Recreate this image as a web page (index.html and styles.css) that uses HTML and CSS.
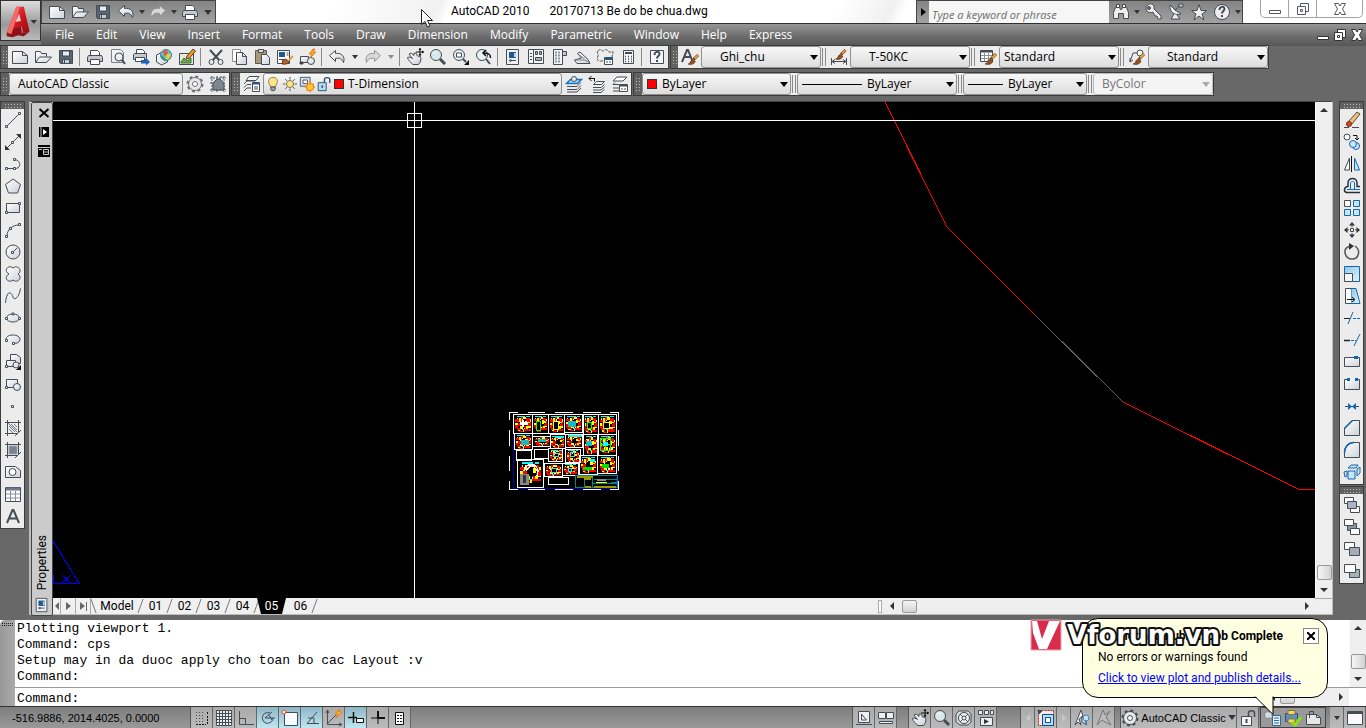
FILE: index.html
```html
<!DOCTYPE html>
<html lang="en">
<head>
<meta charset="utf-8">
<title>AutoCAD 2010 - 20170713 Be do be chua.dwg</title>
<link rel="stylesheet" href="styles.css">
</head>
<body>
<svg class="defs" aria-hidden="true">
  <defs>
    <linearGradient id="paper" x1="0" y1="0" x2="1" y2="1"><stop offset="0" stop-color="#fff"/><stop offset="1" stop-color="#cdd2da"/></linearGradient>
    <linearGradient id="sky" x1="0" y1="0" x2="1" y2="1"><stop offset="0" stop-color="#8ec6e8"/><stop offset="1" stop-color="#e4f4fc"/></linearGradient>
    <linearGradient id="ruby" x1="0" y1="0" x2="1" y2="1"><stop offset="0" stop-color="#f0605c"/><stop offset=".5" stop-color="#d21a20"/><stop offset="1" stop-color="#8c0a10"/></linearGradient>
  </defs>
  <!-- standard tools -->
  <symbol id="new" viewBox="0 0 18 18"><path d="M1.500 3.500h10l5 4v8h-15z" fill="url(#paper)"/><path d="M11.500 3.500v4h5"/></symbol>
  <symbol id="open" viewBox="0 0 18 18"><path d="M1.500 14.500v-11h5l1 2h5v3" fill="url(#paper)"/><path d="M1.500 14.500l4-5.500h12l-5 5.500z" fill="url(#paper)"/></symbol>
  <symbol id="save" viewBox="0 0 18 18"><path d="M2.500 2.500h13v13h-12l-1-1z" fill="#5b6572"/><path d="M5.500 3h7v5h-7z" fill="#e8edf2"/><path d="M5.500 11.500h7v4h-7z" fill="#c8ccd4"/><path d="M7.500 12v3"/></symbol>
  <symbol id="print" viewBox="0 0 18 18"><path d="M4.500 7.500v-5h7l2 2v3" fill="#fff"/><path d="M2.500 7.500h13l1 2v4h-15v-4z" fill="#c5c9cf"/><path d="M4.500 11.500h9v5h-9z" fill="#fff"/></symbol>
  <symbol id="preview" viewBox="0 0 18 18"><path d="M2.500 1.500h9l3 3v10h-12z" fill="url(#paper)" stroke="#7a828c"/><circle cx="10" cy="9" r="4" fill="#e9f1f5"/><path d="M13 12l3 4" stroke-width="2"/></symbol>
  <symbol id="publish" viewBox="0 0 18 18"><path d="M4.500 5.500v-4h6l2 2v2" fill="#fff"/><path d="M2.500 5.500h12v6h-13v-5z" fill="#c5c9cf"/><path d="M3.500 9.500h9v4h-9z" fill="#fff"/><path d="M9 12h5v-2l4 4-4 3.500v-2h-5z" fill="#1b62b8" stroke="none"/></symbol>
  <symbol id="globe" viewBox="0 0 18 18"><path d="M1.500 7l6-3 5 3v7l-6 3-5-3z" fill="url(#paper)"/><circle cx="11" cy="7" r="5.500" fill="#6cc0dc" stroke="#3b7f9c"/><path d="M8 3l4-1 1 4-4 2z" fill="#e95b2a" stroke="none"/><path d="M12 6h4l-2 5h-3z" fill="#e9d32a" stroke="none"/><path d="M7 7l4 5H9L6 9z" fill="#2b9c4c" stroke="none"/></symbol>
  <symbol id="chart" viewBox="0 0 18 18"><path d="M1.500 5.500h14v11h-14z" fill="#e4ecdf"/><path d="M3 14l3-4 3 3 4-3v5H3z" fill="#6aa84a" stroke="#3d7230"/><path d="M8 11l1-3 6-7 2.500 2-6 7z" fill="#f0a020" stroke="#5a3a20"/></symbol>
  <symbol id="cut" viewBox="0 0 18 18"><path d="M3 2l9 10M15 2L6 12" stroke-width="2"/><circle cx="4.500" cy="14" r="2.500"/><circle cx="13.500" cy="14" r="2.500"/></symbol>
  <symbol id="copyclip" viewBox="0 0 18 18"><path d="M2.500 1.500h8v12h-8z" fill="#fff" stroke="#8a8f96"/><path d="M6.500 4.500h6l4 4v8h-10z" fill="url(#paper)"/><path d="M12.500 4.500v4h4"/></symbol>
  <symbol id="paste" viewBox="0 0 18 18"><path d="M2.500 2.500h11v13h-11z" fill="#a99678" stroke="#62584a"/><path d="M5.500 1.500h5v3h-5z" fill="#ddd"/><path d="M8.500 6.500h5l3 3v7h-8z" fill="url(#paper)"/></symbol>
  <symbol id="match" viewBox="0 0 18 18"><path d="M1.500 2.500h12v13h-12z" fill="#fff"/><path d="M3 4h6v5H3z" fill="#24578c" stroke="none"/><path d="M10.500 5h2M10.500 7h2M3 11.500h5"/><path d="M7 12c3-2 5 0 6 2-2 3-5 2-7 2 1-1 0-3 1-4z" fill="#b4612a" stroke="#6a3512"/><path d="M13 12l4-4" stroke="#e89a3a" stroke-width="2"/></symbol>
  <symbol id="blockedit" viewBox="0 0 18 18"><path d="M1.500 8.500h8v6h-8z" fill="url(#paper)"/><circle cx="12" cy="13" r="3.500" fill="url(#paper)"/><path d="M1 14h3v2H1z" fill="#333"/><path d="M14 1l-4 5h3l-2 4 6-6h-3l2-3z" fill="#f5b030" stroke="#e08010"/></symbol>
  <symbol id="undo" viewBox="0 0 18 18"><path d="M1.500 7.500l6-5v3c6-1 10 3 8 9-2-4-4-5-8-4v3z" fill="url(#paper)"/></symbol>
  <symbol id="redo" viewBox="0 0 18 18"><path d="M16.500 7.500l-6-5v3c-6-1-10 3-8 9 2-4 4-5 8-4v3z" fill="#d9d9d9" stroke="#949494"/></symbol>
  <symbol id="caret" viewBox="0 0 6 4"><path d="M0 0h6L3 4z" fill="#333" stroke="none"/></symbol>
  <symbol id="pan" viewBox="0 0 18 18"><path d="M1.500 9.500c2-1 3 0 5 1L3 6l2-1 3 2.500V5l2 0 1.500 3 3 .5c1 3 0 6-2 8H7c-2-2-5-4-5.500-7z" fill="url(#paper)"/><path d="M14 0v8M10 4h8" stroke="#111"/><path d="M14 0l-1.500 2h3zM14 8l-1.500-2h3zM18 4l-2-1.500v3z" fill="#111" stroke="none"/></symbol>
  <symbol id="zoom" viewBox="0 0 18 18"><circle cx="7" cy="7" r="5.500" fill="#d8e8ea"/><path d="M4 6c1-2 3-2 4-2" stroke="#fff"/><path d="M11 11l5 5" stroke-width="3"/></symbol>
  <symbol id="zoomwin" viewBox="0 0 18 18"><circle cx="7" cy="7" r="5.500" fill="#e5f0f0"/><path d="M4.500 5h5v4h-5z" fill="#fff"/><path d="M11 11l3 3" stroke-width="2"/><path d="M17 12v5h-5z" fill="#111" stroke="none"/></symbol>
  <symbol id="zoomprev" viewBox="0 0 18 18"><circle cx="7" cy="7" r="5.500" fill="#e5f0f0"/><path d="M11 11l4 5" stroke-width="2"/><path d="M15.500 10c0-4-2-5-7-5M11 2L8 5l3 3" stroke="#111" stroke-width="1.500"/></symbol>
  <symbol id="props" viewBox="0 0 18 18"><path d="M2.500 1.500h12v15h-12z" fill="#eef0f3"/><path d="M5 4h7v6H5z" fill="#24578c" stroke="none"/><path d="M10 5h2v4h-2z" fill="#b7d3ec" stroke="none"/><path d="M5 12.500l2-1v2zM7 12.500h5"/></symbol>
  <symbol id="dcenter" viewBox="0 0 18 18"><path d="M1.500 1.500h15v14h-15z" fill="#f4f5f7"/><path d="M6.500 2v13M3 5.500h2M3 8.500h2M3 11.500h2"/><path d="M8.500 3.500h2v3h-2zM12.500 3.500h2v3h-2zM8.500 9.500h6v3h-6z" fill="#a9b0ba"/></symbol>
  <symbol id="palettes" viewBox="0 0 18 18"><path d="M3.500 1.500h9v15h-9z" fill="#f4f5f7"/><path d="M12.500 3.500h4v4h-4z" fill="#c6cad0"/><path d="M5 4.500h6M5 7.500h6M5 10.500h6M5 13.500h6" stroke-dasharray="2 1" stroke-width="2" stroke="#8c939c"/></symbol>
  <symbol id="sheets" viewBox="0 0 18 18"><path d="M1.500 12l2.500 3.500h13l-2-4-8-7.500-2.500 1.500 4 4.500z" fill="url(#paper)"/><path d="M4.500 5.500l7 5.500M1.500 12h10l4 2" stroke="#7a828c"/></symbol>
  <symbol id="markup" viewBox="0 0 18 18"><path d="M2 3c2-3 4 0 5 0s3-3 5 0 5-1 5 1-1 4-1 5M2 3c-2 2 1 3 0 5s-1 4 1 5 3-1 4 0" stroke-dasharray="3 1"/><path d="M8.500 9.500h8v7h-8z" fill="#fff"/><path d="M9 11h7" stroke="#24578c" stroke-width="2"/><path d="M10 14h2M13 14h2"/></symbol>
  <symbol id="calc" viewBox="0 0 18 18"><path d="M4.500 2.500h10v13h-10z" fill="#f4f5f7"/><path d="M6 5h7" stroke-width="2"/><path d="M6 8.500h7M6 11h7M6 13.500h7" stroke-dasharray="1 2" stroke-width="1.500"/></symbol>
  <symbol id="helpbox" viewBox="0 0 18 18"><path d="M2.500 2.500h13v13h-13z" fill="#f6f7f8"/><path d="M6.500 7c0-4 5-4 5-1 0 2-2.500 2-2.500 4.500M9 12v2" stroke-width="2"/></symbol>
  <symbol id="brush" viewBox="0 0 12 12"><path d="M0 11c3 0 2-4 5-5l3 2c-1 3-4 4-8 3z" fill="#955023" stroke="#5b2e10" stroke-width=".7"/><path d="M6 6l5-5" stroke="#55300f" stroke-width="3"/><path d="M7 5l4-4" stroke="#f2a23b" stroke-width="2"/></symbol>
  <symbol id="textstyle" viewBox="0 0 18 18"><path d="M1 14L6 2h1l4 10M3 9h6" stroke-width="2"/><use href="#brush" x="7" y="6" width="11" height="11"/></symbol>
  <symbol id="dimstyle" viewBox="0 0 18 18"><path d="M1.500 10v7M16.500 10v7M2 13.500h14M5 11.500l-3 2 3 2M13 11.500l3 2-3 2"/><use href="#brush" x="5" y="1" width="12" height="11"/></symbol>
  <symbol id="tablestyle" viewBox="0 0 18 18"><path d="M1.500 2.500h12v11h-12z" fill="#fff"/><path d="M2 3.500h11" stroke-width="2"/><path d="M2 7.500h11M2 10.500h11M5.500 5v8M9.500 5v8" stroke="#8b929b"/><use href="#brush" x="6" y="5" width="12" height="12"/></symbol>
  <symbol id="leaderstyle" viewBox="0 0 18 18"><path d="M2 14L5 5h5M2 14l0-4M2 14l3-2"/><circle cx="12" cy="5" r="3" fill="#fff"/><use href="#brush" x="5" y="5" width="12" height="12"/></symbol>
  <!-- workspace and layers -->
  <symbol id="gear" viewBox="0 0 18 18"><circle cx="9" cy="9" r="6.500" fill="#e8e8e8"/><circle cx="9" cy="9" r="7.500" stroke-width="2" stroke-dasharray="3 2.900"/><circle cx="9" cy="9" r="2.500" fill="#fff"/></symbol>
  <symbol id="wshome" viewBox="0 0 18 18"><path d="M3 1v16M1 3h16M15 1v16M1 15h16M8 1v2M8 15v3M12 1v2M1 8h2" stroke-dasharray="2 1"/><path d="M4 8l4-4h3l4 4v7H4z" fill="#7d858f"/></symbol>
  <symbol id="layers" viewBox="0 0 18 18"><path d="M3 5.500l3-4h10l-3 4zM1 9l3-3h8M1 12.500l3-3h4M1 16l3-3h4" fill="#f5f5f5"/><path d="M9.500 7.500h7v9h-7z" fill="#fff"/><path d="M10 8.500h6" stroke="#24578c" stroke-width="2"/><path d="M11 12h4M11 14h4"/></symbol>
  <symbol id="bulb" viewBox="0 0 18 18"><path d="M6 12c0-3-2-3-2-6 0-6 10-6 10 0 0 3-2 3-2 6z" fill="#ffe48a" stroke="#8d7638"/><path d="M6.500 12.500h5v3l-1 1h-3l-1-1z" fill="#9aa0a8"/></symbol>
  <symbol id="sun" viewBox="0 0 18 18"><circle cx="9" cy="9" r="4" fill="#ffe48a" stroke="#776838"/><path d="M9 1v3M9 14v3M1 9h3M14 9h3M3.500 3.500l2 2M12.500 12.500l2 2M14.500 3.500l-2 2M5.500 12.500l-2 2"/></symbol>
  <symbol id="vpfreeze" viewBox="0 0 18 18"><path d="M1.500 1.500h11v10h-11z" fill="#d6e4ee"/><path d="M4.500 4.500h5v4h-5z" fill="#fff"/><circle cx="12.500" cy="12.500" r="4" fill="#ffc940" stroke="#f08a10" stroke-width="1.500"/><path d="M12.500 6v3M12.500 16v2M6.500 12.500h2M16 12.500h2M8.500 8.500l1.500 1.500M16.500 8.500L15 10M8.500 16.500l1.500-1.500" stroke="#f08a10" stroke-width="1.500"/></symbol>
  <symbol id="unlock" viewBox="0 0 18 18"><path d="M2.500 7.500h9v9h-9z" fill="#b6dbee" stroke="#1d4d70"/><path d="M9.500 7V4c0-3 6-3 6 0v4" stroke="#1d4d70" stroke-width="1.500"/><path d="M7 10.500v3" stroke="#1d4d70" stroke-width="1.500"/></symbol>
  <symbol id="laycur" viewBox="0 0 18 18"><path d="M1.500 8.500l4-4h11l-4 4z" fill="#a9d4f2" stroke="#1573c4" stroke-width="1.500"/><path d="M2 11.500h10l4-4M2 14.500h10l4-4M2 17h10l4-4"/><circle cx="9" cy="4" r="2.500" fill="#eee"/></symbol>
  <symbol id="layprev" viewBox="0 0 18 18"><path d="M5.500 9.500l3-3h8l-3 3zM5 12.500h8l3.500-3M5 15h8l3.500-3M5 17.500h8l3.500-3" fill="#f5f5f5"/><path d="M1 3.500h6M3.500 1L1 3.500 3.500 6M6.500 3.500v3" stroke="#111"/></symbol>
  <symbol id="laystate" viewBox="0 0 18 18"><path d="M2 6l4-4h10l-4 4zM2 9.500l2-2M2 9.500h6M2 13h6M2 16h6" fill="#fff"/><path d="M8.500 9.500h8v7h-8z" fill="#fff"/><path d="M9 10.500h7" stroke-width="2"/><path d="M10 14h5" stroke-dasharray="2 1"/></symbol>
  <!-- draw -->
  <symbol id="line" viewBox="0 0 18 18"><path d="M3 15L15 3"/><path d="M1.500 14.500h2v2h-2zM14.500 1.500h2v2h-2z" fill="#fff"/></symbol>
  <symbol id="xline" viewBox="0 0 18 18"><path d="M3 15L15 3"/><path d="M1 17v-5l5 5zM17 1v5l-5-5z" fill="#333" stroke="none"/><path d="M7.500 8.500h2v2h-2z" fill="#fff"/></symbol>
  <symbol id="pline" viewBox="0 0 18 18"><path d="M3 13.500h8c7 0 6-9-1-9"/><path d="M1.500 12.500h2v2h-2zM9.500 12.500h2v2h-2zM9.500 3.500h2v2h-2z" fill="#fff"/></symbol>
  <symbol id="polygon" viewBox="0 0 18 18"><path d="M9 2l7.500 5.500-3 8.500h-9l-3-8.500z" fill="url(#paper)"/></symbol>
  <symbol id="rect" viewBox="0 0 18 18"><path d="M2.500 4.500h13v9h-13z" fill="url(#paper)"/><path d="M1.500 12.500h2v2h-2zM14.500 3.500h2v2h-2z" fill="#fff"/></symbol>
  <symbol id="arc" viewBox="0 0 18 18"><path d="M3 15C3 9 8 4 15 4"/><path d="M1.500 14.500h2v2h-2zM5.500 6.500h2v2h-2zM14.500 2.500h2v2h-2z" fill="#fff"/></symbol>
  <symbol id="circle" viewBox="0 0 18 18"><circle cx="9" cy="9" r="7" fill="url(#paper)"/><path d="M9 9l4-4"/><path d="M7.500 8.500h2v2h-2z" fill="#fff"/></symbol>
  <symbol id="cloud" viewBox="0 0 18 18"><path d="M5 9C-1 6 4-1 9 3c5-4 10 3 5 6 5 3 0 10-5 6-5 4-10-3-4-6z" fill="url(#paper)"/></symbol>
  <symbol id="spline" viewBox="0 0 18 18"><path d="M1.500 16C3 1 8 6 9 10s6 1 7.500-8.500"/></symbol>
  <symbol id="ellipse" viewBox="0 0 18 18"><ellipse cx="9" cy="9" rx="6.500" ry="4" fill="url(#paper)"/><path d="M1.500 8.500h2v2h-2zM14.500 8.500h2v2h-2zM8 4h2v2H8z" fill="#fff"/></symbol>
  <symbol id="earc" viewBox="0 0 18 18"><path d="M2 8c1-6 15-5 14 1-1 3-4 3.500-6 3.500" fill="url(#paper)"/><path d="M1.500 8.500h2v2h-2zM8.500 11.500h2v2h-2z" fill="#fff"/></symbol>
  <symbol id="insert" viewBox="0 0 18 18"><path d="M6.500 1.500h6l4 3v6h-10z" fill="url(#paper)"/><path d="M2.500 7.500h9v6h-9z" fill="url(#paper)"/><circle cx="12" cy="12" r="3" fill="url(#paper)"/><path d="M1.500 12.500h2v2h-2z" fill="#fff"/><path d="M17 12v5h-5z" fill="#111" stroke="none"/></symbol>
  <symbol id="block" viewBox="0 0 18 18"><path d="M2.500 4.500h11v8h-11z" fill="url(#paper)"/><circle cx="13" cy="12" r="3.500" fill="url(#paper)"/><path d="M1.500 11.500h2v2h-2z" fill="#fff"/></symbol>
  <symbol id="point" viewBox="0 0 18 18"><path d="M7.500 8.500h2v2h-2z" fill="#fff"/></symbol>
  <symbol id="hatch" viewBox="0 0 18 18"><path d="M1 3.500h16M1 14.500h12M3.500 1v16M14.500 1v12"/><path d="M5 7l6 6M5 10l4 4M7 5l6 6M10 5l3 3M4 4l9 9" stroke="#777e88"/><path d="M11 17l6-6"/></symbol>
  <symbol id="gradient" viewBox="0 0 18 18"><path d="M1 3.500h16M1 14.500h12M3.500 1v16M14.500 1v12M11 17l6-6"/><path d="M5 5h8v8H5z" fill="#7c838e" stroke="#9da3ac"/></symbol>
  <symbol id="region" viewBox="0 0 18 18"><path d="M1.500 3.500h10l5 4v7h-15z" fill="url(#paper)"/><circle cx="8.500" cy="9" r="3.500" fill="#fff"/></symbol>
  <symbol id="table" viewBox="0 0 18 18"><path d="M1.500 2.500h15v14h-15z" fill="#fff"/><path d="M2 4h14" stroke="#6d7890" stroke-width="3"/><path d="M2 9h14M2 13h14M6.500 6v10M11.500 6v10" stroke="#888f99"/></symbol>
  <symbol id="mtext" viewBox="0 0 18 18"><path d="M3 16L8.500 3h1L15 16M5 11.500h8" stroke-width="2"/></symbol>
  <!-- modify -->
  <symbol id="erase" viewBox="0 0 18 18"><path d="M5 11L14 1l3 2-8 10z" fill="#ecc27a" stroke="#5a4a35"/><circle cx="6" cy="13" r="2.500" fill="#dc4424" stroke="#7a3010"/><path d="M1 16.500h5M9 16.500h7"/></symbol>
  <symbol id="copy" viewBox="0 0 18 18"><circle cx="4" cy="4" r="3" fill="#fff"/><circle cx="13" cy="13" r="3.500" class="hue"/><circle cx="10" cy="11" r="3.500" class="hue"/><path d="M10 2.500h4v4M12 5l2 2 2-2" stroke="#111"/></symbol>
  <symbol id="mirror" viewBox="0 0 18 18"><path d="M6.500 3v12h-5z" fill="#fff"/><path d="M8.500 1v16" stroke="#111"/><path d="M11.500 3v12h5z" class="hue"/></symbol>
  <symbol id="offset" viewBox="0 0 18 18"><path d="M17 15.500H4c-4 0-3-6 1-6V6c0-6 9-6 9 0v3.500h3" stroke="#26303a" stroke-width="1.500"/><path d="M17 12.500H4M7.500 12V6c0-2 4-2 4 0v6" stroke="#1267b5"/></symbol>
  <symbol id="array" viewBox="0 0 18 18"><path d="M1.500 1.500h6v6h-6z" fill="#fff"/><path d="M10.500 1.500h6v6h-6zM1.500 10.500h6v6h-6zM10.500 10.500h6v6h-6z" class="hue"/></symbol>
  <symbol id="move" viewBox="0 0 18 18"><path d="M7.500 7.500h3v3h-3zM9 2v4M9 12v4M2 9h4M12 9h4"/><path d="M9 1l3 3.500H6zM9 17l3-3.500H6zM1 9l3.500-3v6zM17 9l-3.500-3v6z" fill="#333" stroke="none"/></symbol>
  <symbol id="rotate" viewBox="0 0 18 18"><path d="M12 3c6 4 4 13-3 13S-1 6 6 3.500" stroke="#555" stroke-width="1.500"/><path d="M6 0l5 3-5 4z" fill="#333" stroke="none"/></symbol>
  <symbol id="scale" viewBox="0 0 18 18"><path d="M1.500 1.500h15v15h-15z" fill="url(#sky)" stroke="#1267b5"/><path d="M1.500 8.500h8v8h-8z" fill="#f5f5f5"/></symbol>
  <symbol id="stretch" viewBox="0 0 18 18"><path d="M8 1.500h5l4 15H8z" fill="url(#sky)" stroke="#1267b5"/><path d="M8 1.500H2.500v15H8" fill="#fff"/><path d="M4 12.500h7M9 10l3 2.500L9 15" stroke="#111"/></symbol>
  <symbol id="trim" viewBox="0 0 18 18"><path d="M1 9.500h6" stroke="#222"/><path d="M5 15L10 3" stroke="#1267b5"/><path d="M10 9.500h7" stroke="#1267b5" stroke-dasharray="3 1"/></symbol>
  <symbol id="extend" viewBox="0 0 18 18"><path d="M1 9.500h6" stroke="#222" stroke-width="1.500"/><path d="M11 15l6-12" stroke="#1267b5"/><path d="M8 9.500h5" stroke="#1267b5" stroke-dasharray="3 1"/></symbol>
  <symbol id="breakpt" viewBox="0 0 18 18"><path d="M1.500 4.500h15v9h-15z" fill="url(#paper)"/><path d="M11 3h4v3h-4z" fill="#1267b5" stroke="none"/></symbol>
  <symbol id="break" viewBox="0 0 18 18"><path d="M6 4.500H1.500v10h15v-10H13" fill="url(#paper)"/><path d="M4 3h3v3H4zM12 3h3v3h-3z" fill="#1267b5" stroke="none"/></symbol>
  <symbol id="join" viewBox="0 0 18 18"><path d="M2 9.500h14"/><path d="M5 6l4 3.500L5 13zM13 6L9 9.500l4 3.500z" fill="#1267b5" stroke="none"/></symbol>
  <symbol id="chamfer" viewBox="0 0 18 18"><path d="M9 1.500h7.500v15h-15V9z" fill="url(#paper)"/><path d="M1.500 9.500l8-8" stroke="#1267b5" stroke-width="1.500"/></symbol>
  <symbol id="fillet" viewBox="0 0 18 18"><path d="M11 1.500h5.500v15h-15V11c0-6 4-9.500 9.500-9.500z" fill="url(#paper)"/><path d="M1.500 12c0-6 4-10.500 9.500-10.500" stroke="#1267b5" stroke-width="1.500"/></symbol>
  <symbol id="explode" viewBox="0 0 18 18"><path d="M1 9l3-1v5l-2 1zM5 8h7v8H5zM5 5l3-3h7l-2 3zM14 6l3-2v6l-3 3z" class="hue"/></symbol>
  <symbol id="front" viewBox="0 0 18 18"><path d="M1.500 1.500h9v6h-9zM7.500 10.500h9v6h-9z" fill="#fff"/><path d="M4.500 5.500h9v7h-9z" fill="#aeb2c4"/></symbol>
  <symbol id="back" viewBox="0 0 18 18"><path d="M4.500 5.500h9v7h-9z" fill="#8d979d"/><path d="M1.500 1.500h9v6h-9zM7.500 10.500h9v6h-9z" fill="#fff"/></symbol>
  <symbol id="above" viewBox="0 0 18 18"><path d="M1.500 2.500h10v7h-10z" fill="#fff"/><path d="M6.500 7.500h10v8h-10z" fill="#a7abb9"/></symbol>
  <symbol id="under" viewBox="0 0 18 18"><path d="M6.500 7.500h10v8h-10z" fill="#a7b3b3"/><path d="M1.500 2.500h11v8h-11z" fill="#fff"/></symbol>
  <!-- title bar -->
  <symbol id="binoc" viewBox="0 0 18 18"><path d="M3.500 4.500h4l1 2h1l1-2h4l2 5v6h-5v-5h-5v5h-5v-6zM4.500 1.500h3v3h-3zM10.500 1.500h3v3h-3z" fill="#eee"/></symbol>
  <symbol id="key" viewBox="0 0 18 18"><path d="M9 9c-4 2-9-2-6-6s8-2 7 3l7 7v3h-3l-1-3-2 0z" fill="#eee"/><circle cx="5" cy="5" r="1.500" fill="#777"/></symbol>
  <symbol id="dish" viewBox="0 0 18 18"><path d="M3 2c-1 7 5 11 11 9L8 7z" fill="#eee"/><path d="M8 7l6-5M7 11l-3 5h9l-3-4" fill="#eee"/><path d="M12 1h4v3h-4z" fill="#ccc"/></symbol>
  <symbol id="star" viewBox="0 0 18 18"><path d="M9 1.500l2 6h5.500L12 11l2 6-5-4-5 4 2-6-4.500-3.500H7z" fill="#eee"/></symbol>
  <symbol id="help" viewBox="0 0 18 18"><circle cx="9" cy="9" r="7.500" fill="#eee"/><path d="M6.500 7c0-4 5-4 5-1 0 2-2.500 2-2.500 4.500M9 12v2" stroke-width="2"/></symbol>
  <symbol id="wmin" viewBox="0 0 14 14"><path d="M1.500 8.500h11v3h-11z" fill="#fff"/></symbol>
  <symbol id="wmax" viewBox="0 0 14 14"><path d="M4.500 1.500h8v8h-8z" fill="#fff"/><path d="M1.500 4.500h8v8h-8z" fill="#fff"/><path d="M4.500 7.500h2v2h-2z"/></symbol>
  <symbol id="wclose" viewBox="0 0 14 14"><path d="M1.500 1.500h4L7 4l1.500-2.500h4L9.500 7l3 5.500h-4L7 10l-1.500 2.500h-4l3-5.500z" fill="#fff"/></symbol>
  <!-- status bar -->
  <symbol id="snap" viewBox="0 0 18 18"><path d="M3 3.500h9M3 6.500h9M3 9.500h9M3 12.500h9" stroke-dasharray="1 2"/><path d="M3 15.500h10M14.500 3v2M14.500 7v8" stroke="#111" stroke-dasharray="2 1"/></symbol>
  <symbol id="grid" viewBox="0 0 18 18"><path d="M1.500 1.500h15v15h-15z" fill="#eee"/><path d="M2 4.500h14M2 7.500h14M2 10.500h14M2 13.500h14M4.500 2v14M7.500 2v14M10.500 2v14M13.500 2v14"/></symbol>
  <symbol id="ortho" viewBox="0 0 18 18"><path d="M2.500 2v13.500H17M2.500 9.500h6v6"/></symbol>
  <symbol id="polar" viewBox="0 0 18 18"><path d="M11 4C5 2 1 8 5 13c4 3 9 0 9-4M6 9h10M6 9l7-6M10 6l3 5"/></symbol>
  <symbol id="osnap" viewBox="0 0 18 18"><path d="M3.500 3.500h13v13h-13z" fill="#f8fcff"/><circle cx="3" cy="3" r="2" fill="#fff" stroke="#e0461c"/></symbol>
  <symbol id="otrack" viewBox="0 0 18 18"><path d="M14 3L4 14.500h12M5 9h6v5"/></symbol>
  <symbol id="ducs" viewBox="0 0 18 18"><path d="M2.500 1v14.500H17M2 15L11 6M1 4l1.500-3L4 4M14 14l3 1.500-3 1.500"/><path d="M15 0l-5 5h3l-2 4 6-6h-3z" fill="#ffba30" stroke="#e08010"/></symbol>
  <symbol id="dyn" viewBox="0 0 18 18"><path d="M1 8.500h9M6.500 3v11" stroke="#111" stroke-width="1.500"/><path d="M9.500 9.500h7v4h-7z" fill="#fff" stroke="#111"/></symbol>
  <symbol id="lwt" viewBox="0 0 18 18"><path d="M2 9h7M9 9v6" stroke="#111"/><path d="M9 9h7M9 2v8" stroke="#111" stroke-width="2"/></symbol>
  <symbol id="qp" viewBox="0 0 18 18"><path d="M4.500 3.500h8v12h-8z" fill="#fff" stroke="#111"/><path d="M6 6.500h5M6 9.500h5M6 12.500h5" stroke="#111" stroke-dasharray="2 1"/></symbol>
  <symbol id="modelpaper" viewBox="0 0 18 18"><path d="M3.500 2.500h11v11h-11z" fill="#eee"/><path d="M6.500 5v6l5 0zM1 15.500h16"/></symbol>
  <symbol id="qvlayout" viewBox="0 0 18 18"><path d="M1.500 3.500h7v6h-7zM9.500 3.500h7v6h-7zM2.500 12.500h13v2h-13z" fill="#eee"/></symbol>
  <symbol id="wheel" viewBox="0 0 18 18"><path d="M4 2h9l3 3v8l-3 3H5l-4-3V5z" fill="#ddd"/><circle cx="9" cy="9" r="5.500" fill="#f2f2f2"/><circle cx="9" cy="9" r="2"/><path d="M5 5l3 3M13 5l-3 3M5 13l3-3M13 13l-3-3"/></symbol>
  <symbol id="motion" viewBox="0 0 18 18"><path d="M1.500 1.500h4v4h-4zM7.500 1.500h4v4h-4zM13.500 1.500h3v4h-3zM3.500 8.500h12v8h-12z" fill="#eee"/><path d="M7 10l5 2.500L7 15z" fill="#333" stroke="none"/></symbol>
  <symbol id="vpmax" viewBox="0 0 18 18"><path d="M1.500 1.500h15v15h-15z" fill="#eee" stroke="#c02020" stroke-dasharray="2 1"/><path d="M5.500 5.500h11v11h-11z" fill="#b9def4" stroke="#144d80"/><path d="M8.500 8.500h5v5h-5z" fill="#fff" stroke="#144d80"/><path d="M1 1l4 1-3 3z" fill="#144d80"/></symbol>
  <symbol id="annovis" viewBox="0 0 18 18"><path d="M2 16L8 1l2 6-4 3 2 6-3-3zM9 7l5 9-5-3z" fill="#f5f5f5"/><circle cx="13" cy="9" r="3" fill="#bde2f8" stroke="#4283b2"/><path d="M13 12v4" stroke="#4283b2" stroke-width="2"/></symbol>
  <symbol id="annoauto" viewBox="0 0 18 18"><path d="M2 16L8 1l2 5 5-4-4 6 5 8-6-3-3-2z" fill="#bbb" stroke="#777"/></symbol>
  <symbol id="padlock" viewBox="0 0 18 18"><path d="M2.500 7.500h10v9h-10z" fill="#f5f5f5"/><path d="M9.500 7V4c0-3 6-3 6 0v4" stroke-width="1.500"/><path d="M7.500 10v4" stroke-width="2"/></symbol>
  <symbol id="plotpub" viewBox="0 0 18 18"><path d="M1 3h7v6H1z" fill="#d6dde0" stroke="#77838c" stroke-dasharray="2 1"/><path d="M8.500 6.500h8v10h-8z" fill="#e5f3ff" stroke="#326899"/><path d="M10 9h5M10 11.500h5M10 14h5" stroke="#326899"/></symbol>
  <symbol id="printok" viewBox="0 0 18 18"><path d="M1.500 4.500h12v8h-12z" fill="#5e8fbd" stroke="#28507b"/><path d="M4 1.500h7v4H4zM4 10h7v4H4z" fill="#f6d764" stroke="#8a7330"/><path d="M8 13l3 3 6-8" stroke="#8be018" stroke-width="3"/></symbol>
  <symbol id="tray" viewBox="0 0 18 18"><path d="M2.500 5.500h10l4 3v7h-14z" fill="#e6e6e6"/><path d="M5.500 9V2.500h4V6M12.500 5.500v3h4"/></symbol>
  <symbol id="clean" viewBox="0 0 18 18"><path d="M1.500 2.500h15v13h-15z" fill="#fafafa"/><path d="M2 4h14" stroke-width="2"/></symbol>
  <!-- sheet thumbnails -->
  <symbol id="noise" viewBox="0 0 16 16" preserveAspectRatio="none">
    <path d="M1 4h3v2H1zM3 7h3v3H3zM11 3h3v3h-3zM12 8h3v2h-3zM2 11h4v2H2zM9 12h4v2H9zM6 2h2v2H6zM13 12h2v2h-2zM6 14h2v1H6zM1 9h2v2H1zM13 6h2v2h-2zM9 10h2v2H9zM5 4h2v2H5zM4 12h2v3H4z" fill="#f00"/>
    <path d="M4 3h2v3H4zM1 7h2v2H1zM10 5h2v3h-2zM5 10h3v2H5zM12 6h2v1h-2zM11 10h2v2h-2zM3 13h2v1H3zM8 2h3v2H8zM8 13h1v2H8zM14 4h1v2h-1zM2 3h1v1H2zM13 10h2v1h-2z" fill="#ff0"/>
    <path d="M2 1h8v1H2zM11 1h3v1h-3zM7 12h2v1H7z" fill="#0ff"/><path d="M5 6h1v1H5zM9 11h1v1H9zM7 4h1v1H7z" fill="#fff"/>
  </symbol>
</svg>

<header class="top">
  <button class="logo" aria-label="Application menu">
    <svg viewBox="0 0 40 38"><path d="M5 31L15 4h8l6 26-7 2-1-7-8 2-2 6z" fill="url(#ruby)"/><path d="M14 20l4-9 2 8z" fill="#e7c9ca"/><path d="M5 31L15 4l4 0-9 29z" fill="#f26b67"/><path d="M5 31l5 2 2-6 8-2 1 7 8-2-6 5-6-1-6 2-6-1z" fill="#8d1016"/><path d="M30 18h7l-3.500 4z" fill="#333"/></svg>
  </button>
  <div class="top-rows">
    <div class="titlebar">
      <div class="quick">
        <button aria-label="New"><svg class="ic"><use href="#new"/></svg></button>
        <button aria-label="Open"><svg class="ic"><use href="#open"/></svg></button>
        <button aria-label="Save"><svg class="ic"><use href="#save"/></svg></button>
        <button aria-label="Undo"><svg class="ic"><use href="#undo"/></svg></button>
        <button class="slim" aria-label="Undo list"><svg class="car"><use href="#caret"/></svg></button>
        <button aria-label="Redo"><svg class="ic"><use href="#redo"/></svg></button>
        <button class="slim" aria-label="Redo list"><svg class="car"><use href="#caret"/></svg></button>
        <button aria-label="Plot"><svg class="ic"><use href="#print"/></svg></button>
        <button class="slim end" aria-label="Customize"><svg class="car big"><use href="#caret"/></svg></button>
      </div>
      <h1 class="title"><span>AutoCAD 2010</span><span>20170713 Be do be chua.dwg</span></h1>
      <div class="infocenter">
        <button class="expand" aria-label="Collapse search"><svg viewBox="0 0 5 8"><path d="M0 0l5 4-5 4z"/></svg></button>
        <input type="text" placeholder="Type a keyword or phrase" aria-label="Search">
        <button aria-label="Search"><svg class="ic"><use href="#binoc"/></svg></button>
        <button class="slim" aria-label="Search options"><svg class="car"><use href="#caret"/></svg></button>
        <button aria-label="Subscription"><svg class="ic"><use href="#key"/></svg></button>
        <button aria-label="Communication"><svg class="ic"><use href="#dish"/></svg></button>
        <button aria-label="Favorites"><svg class="ic"><use href="#star"/></svg></button>
        <button aria-label="Help"><svg class="ic"><use href="#help"/></svg></button>
        <button class="slim" aria-label="Help options"><svg class="car"><use href="#caret"/></svg></button>
      </div>
      <div class="winbtns">
        <button aria-label="Minimize"><svg><use href="#wmin"/></svg></button>
        <button aria-label="Restore"><svg><use href="#wmax"/></svg></button>
        <button class="close" aria-label="Close"><svg><use href="#wclose"/></svg></button>
      </div>
      <svg class="pointer" viewBox="0 0 12 19"><path d="M.5.500v15l3.500-3 2.500 5.500 2.500-1-2.500-5.500h5z" fill="#fff" stroke="#222"/></svg>
    </div>
    <nav class="menubar">
      <button>File</button><button>Edit</button><button>View</button><button>Insert</button><button>Format</button><button>Tools</button><button>Draw</button><button>Dimension</button><button>Modify</button><button>Parametric</button><button>Window</button><button>Help</button><button>Express</button>
      <span class="mdi">
        <button aria-label="Minimize drawing"><svg><use href="#wmin"/></svg></button>
        <button aria-label="Restore drawing"><svg><use href="#wmax"/></svg></button>
        <button aria-label="Close drawing"><svg><use href="#wclose"/></svg></button>
      </span>
    </nav>
  </div>
</header>

<div class="bars">
  <div class="barrow">
    <div class="bar" role="toolbar" aria-label="Standard">
      <i class="grip thin"></i>
      <button aria-label="New"><svg class="ic"><use href="#new"/></svg></button>
      <button aria-label="Open"><svg class="ic"><use href="#open"/></svg></button>
      <button aria-label="Save"><svg class="ic"><use href="#save"/></svg></button>
      <i class="sep"></i>
      <button aria-label="Plot"><svg class="ic"><use href="#print"/></svg></button>
      <button aria-label="Plot preview"><svg class="ic"><use href="#preview"/></svg></button>
      <button aria-label="Publish"><svg class="ic"><use href="#publish"/></svg></button>
      <button aria-label="3D DWF"><svg class="ic"><use href="#globe"/></svg></button>
      <button aria-label="Sheet"><svg class="ic"><use href="#chart"/></svg></button>
      <i class="sep"></i>
      <button aria-label="Cut"><svg class="ic"><use href="#cut"/></svg></button>
      <button aria-label="Copy"><svg class="ic"><use href="#copyclip"/></svg></button>
      <button aria-label="Paste"><svg class="ic"><use href="#paste"/></svg></button>
      <button aria-label="Match properties"><svg class="ic"><use href="#match"/></svg></button>
      <button aria-label="Block editor"><svg class="ic"><use href="#blockedit"/></svg></button>
      <i class="sep"></i>
      <button aria-label="Undo"><svg class="ic"><use href="#undo"/></svg></button>
      <button class="slim" aria-label="Undo list"><svg class="car"><use href="#caret"/></svg></button>
      <button aria-label="Redo"><svg class="ic"><use href="#redo"/></svg></button>
      <button class="slim" aria-label="Redo list"><svg class="car off"><use href="#caret"/></svg></button>
      <i class="sep"></i>
      <button aria-label="Pan"><svg class="ic"><use href="#pan"/></svg></button>
      <button aria-label="Zoom"><svg class="ic"><use href="#zoom"/></svg></button>
      <button aria-label="Zoom window"><svg class="ic"><use href="#zoomwin"/></svg></button>
      <button aria-label="Zoom previous"><svg class="ic"><use href="#zoomprev"/></svg></button>
      <i class="sep"></i>
      <button aria-label="Properties"><svg class="ic"><use href="#props"/></svg></button>
      <button aria-label="DesignCenter"><svg class="ic"><use href="#dcenter"/></svg></button>
      <button aria-label="Tool palettes"><svg class="ic"><use href="#palettes"/></svg></button>
      <button aria-label="Sheet set manager"><svg class="ic"><use href="#sheets"/></svg></button>
      <button aria-label="Markup set manager"><svg class="ic"><use href="#markup"/></svg></button>
      <button aria-label="QuickCalc"><svg class="ic"><use href="#calc"/></svg></button>
      <i class="sep"></i>
      <button aria-label="Help"><svg class="ic"><use href="#helpbox"/></svg></button>
    </div>
    <div class="bar" role="toolbar" aria-label="Styles">
      <i class="grip thin"></i>
      <button aria-label="Text style"><svg class="ic"><use href="#textstyle"/></svg></button>
      <label class="combo w-style inset"><select aria-label="Text style"><option>Ghi_chu</option></select></label>
      <i class="sep two"></i>
      <button aria-label="Dimension style"><svg class="ic"><use href="#dimstyle"/></svg></button>
      <label class="combo w-style inset"><select aria-label="Dimension style"><option>T-50KC</option></select></label>
      <i class="sep two"></i>
      <button aria-label="Table style"><svg class="ic"><use href="#tablestyle"/></svg></button>
      <label class="combo w-style"><select aria-label="Table style"><option>Standard</option></select></label>
      <i class="sep two"></i>
      <button aria-label="Multileader style"><svg class="ic"><use href="#leaderstyle"/></svg></button>
      <label class="combo w-style inset"><select aria-label="Multileader style"><option>Standard</option></select></label>
    </div>
  </div>
  <div class="barrow">
    <div class="bar" role="toolbar" aria-label="Workspaces">
      <i class="grip"></i>
      <label class="combo w-ws"><select aria-label="Workspace"><option>AutoCAD Classic</option></select></label>
      <button aria-label="Workspace settings"><svg class="ic mute"><use href="#gear"/></svg></button>
      <button aria-label="My workspace"><svg class="ic"><use href="#wshome"/></svg></button>
    </div>
    <div class="bar" role="toolbar" aria-label="Layers">
      <i class="grip"></i>
      <button aria-label="Layer properties"><svg class="ic"><use href="#layers"/></svg></button>
      <label class="combo w-layer"><svg class="ic sm"><use href="#bulb"/></svg><svg class="ic sm"><use href="#sun"/></svg><svg class="ic sm"><use href="#vpfreeze"/></svg><svg class="ic sm"><use href="#unlock"/></svg><i class="swatch"></i><select aria-label="Layer"><option>T-Dimension</option></select></label>
      <button aria-label="Make layer current"><svg class="ic"><use href="#laycur"/></svg></button>
      <button aria-label="Layer previous"><svg class="ic"><use href="#layprev"/></svg></button>
      <button aria-label="Layer states"><svg class="ic"><use href="#laystate"/></svg></button>
    </div>
    <div class="bar" role="toolbar" aria-label="Object properties">
      <i class="grip"></i>
      <label class="combo w-color"><i class="swatch"></i><select aria-label="Color"><option>ByLayer</option></select></label>
      <i class="sep two"></i>
      <label class="combo w-ltype"><i class="stroke"></i><select aria-label="Linetype"><option>ByLayer</option></select></label>
      <i class="sep two"></i>
      <label class="combo w-lw"><i class="stroke short"></i><select aria-label="Lineweight"><option>ByLayer</option></select></label>
      <i class="sep two"></i>
      <label class="combo w-style disabled"><select aria-label="Plot style" disabled><option>ByColor</option></select></label>
    </div>
  </div>
</div>

<main class="workspace">
  <div class="dock">
    <div class="vbar" role="toolbar" aria-label="Draw">
      <i class="vgrip"></i>
      <button aria-label="Line"><svg class="ic"><use href="#line"/></svg></button>
      <button aria-label="Construction line"><svg class="ic"><use href="#xline"/></svg></button>
      <button aria-label="Polyline"><svg class="ic"><use href="#pline"/></svg></button>
      <button aria-label="Polygon"><svg class="ic"><use href="#polygon"/></svg></button>
      <button aria-label="Rectangle"><svg class="ic"><use href="#rect"/></svg></button>
      <button aria-label="Arc"><svg class="ic"><use href="#arc"/></svg></button>
      <button aria-label="Circle"><svg class="ic"><use href="#circle"/></svg></button>
      <button aria-label="Revision cloud"><svg class="ic"><use href="#cloud"/></svg></button>
      <button aria-label="Spline"><svg class="ic"><use href="#spline"/></svg></button>
      <button aria-label="Ellipse"><svg class="ic"><use href="#ellipse"/></svg></button>
      <button aria-label="Ellipse arc"><svg class="ic"><use href="#earc"/></svg></button>
      <button aria-label="Insert block"><svg class="ic"><use href="#insert"/></svg></button>
      <button aria-label="Make block"><svg class="ic"><use href="#block"/></svg></button>
      <button aria-label="Point"><svg class="ic"><use href="#point"/></svg></button>
      <button aria-label="Hatch"><svg class="ic"><use href="#hatch"/></svg></button>
      <button aria-label="Gradient"><svg class="ic"><use href="#gradient"/></svg></button>
      <button aria-label="Region"><svg class="ic"><use href="#region"/></svg></button>
      <button aria-label="Table"><svg class="ic"><use href="#table"/></svg></button>
      <button aria-label="Multiline text"><svg class="ic"><use href="#mtext"/></svg></button>
    </div>
  </div>

  <section class="frame">
    <aside class="palette">
      <button aria-label="Close palette"><svg viewBox="0 0 12 12"><path d="M1.500 2l9 8M10.500 2l-9 8" stroke="#000" stroke-width="2"/></svg></button>
      <button aria-label="Auto-hide"><svg viewBox="0 0 12 12"><path d="M1 1h1.500v10H1zM3.500 1H11v10H3.500z" fill="#000"/><path d="M5 3l4 3-4 3z" fill="#fff"/></svg></button>
      <button aria-label="Palette menu"><svg viewBox="0 0 12 12"><path d="M0 0h12v2H0zM0 3h12v9H0z" fill="#000"/><path d="M1 4.500h3M5.500 4.500h5v5h-5zM6 7h4" stroke="#ccc"/></svg></button>
      <span class="ptitle">Properties</span>
      <svg class="ic sm"><use href="#props"/></svg>
    </aside>
    <div class="view">
      <div class="viewrow">
        <svg class="canvas" viewBox="0 0 1262 496" preserveAspectRatio="xMinYMin slice" role="img" aria-label="Drawing area">
          <g fill="none" shape-rendering="crispEdges">
            <path d="M832 0l62 125 88 88M1070 300l175 87h17" stroke="#f00"/>
            <path d="M982 213l88 87" stroke="#606060"/>
            <path d="M0 439l26 42H0M0 481v-8M9 481l9-8M9 473l9 8" stroke="#00f"/>
            <svg x="447" y="298" width="130" height="100" viewBox="0 0 390 300">
              <path d="M40 102v162h310V42" stroke="#00a" stroke-width="3"/>
              <path d="M28 60V38h26M84 38h50M165 38h54M248 38h54M331 38h24v26M355 91v47M355 167v47M355 243v25h-24M302 268h-54M219 268h-54M134 268H84M54 268H28v-25M28 214v-47M28 138V91" stroke="#fff" stroke-width="3"/>
              <g>
                <use href="#noise" x="43" y="44" width="52" height="56"/><use href="#noise" x="99" y="44" width="45" height="54"/><use href="#noise" x="148" y="44" width="44" height="56"/><use href="#noise" x="196" y="44" width="50" height="52"/><use href="#noise" x="251" y="44" width="42" height="60"/><use href="#noise" x="297" y="44" width="50" height="58"/>
                <use href="#noise" x="45" y="103" width="50" height="46"/><use href="#noise" x="101" y="108" width="50" height="32"/><use href="#noise" x="151" y="106" width="45" height="40"/><use href="#noise" x="199" y="104" width="46" height="40"/><use href="#noise" x="252" y="104" width="40" height="62"/><use href="#noise" x="297" y="104" width="52" height="60"/>
                <use href="#noise" x="148" y="147" width="42" height="38"/><use href="#noise" x="198" y="148" width="42" height="42"/><use href="#noise" x="240" y="168" width="50" height="54"/><use href="#noise" x="296" y="168" width="52" height="54"/>
                <use href="#noise" x="134" y="191" width="52" height="40"/><use href="#noise" x="189" y="191" width="44" height="34"/><use href="#noise" x="56" y="183" width="70" height="70"/>
              </g>
              <path d="M60 66h24v9H60zM66 60h6v21h-6z" fill="#fff"/><path d="M109 63h13v27h-13zM261 66h12v18h-12z" fill="#000" stroke="#0f0" stroke-width="3"/><path d="M160 63h15v24h-15zM309 66h18v18h-18z" fill="#000" stroke="#ff0" stroke-width="3"/><path d="M204 63h24v18h-24zM63 120h25v15H63zM114 117h24v9h-24zM258 123h18v15h-18z" fill="#1bc"/><path d="M302 114h30v36h-30zM317 114v36M302 132h30" stroke="#0f0" stroke-width="3"/><path d="M309 126h15v12h-15zM204 105h42v7h-42zM164 108h27v5h-27zM270 177h15v9h-15z" fill="#0ff"/><path d="M249 200h27v10h-27zM305 192h21v12h-21z" fill="#0d0"/>
              <path d="M72 213c0-24 39-27 42 0l-3 15M78 210l18-15 15 15" stroke="#fff" stroke-width="4"/><path d="M60 222h27v33H60z" fill="#888"/><path d="M69 225h9v24h-9z" fill="#333"/><path d="M210 156h12v12h-12zM159 159h15v9h-15zM153 204h15v12h-15zM204 204h9v9h-9z" stroke="#4de" stroke-width="3"/>
              <path d="M40 43h57v57H40zM97 43h48v57H97zM145 43h48v57h-48zM193 43h54v54h-54zM250 43h45v60h-45zM295 43h53v60h-53zM43 100h54v49H43zM97 108h53v32H97zM150 103h47v42h-47zM197 103h50v40h-50zM250 103h43v62h-43zM295 103h55v62h-55zM49 150h46v30H49zM103 148h42v27h-42zM145 145h43v40h-43zM197 147h43v41h-43zM238 167h53v56h-53zM293 167h57v54h-57zM52 178h78v84H52zM132 190h55v40h-55zM187 190h48v36h-48zM145 233h61v20h-61z" stroke="#fff" stroke-width="3"/>
              <path d="M225 227h126v36H225zM253 236v27M278 227v36M281 237h70M332 246h18M278 251h72" stroke="#088" stroke-width="3"/><path d="M231 228h48v6h-48zM255 258h18v5h-18zM282 258h66v5h-66zM252 233h21v6h-21z" fill="#990"/><path d="M291 237h27v6h-27z" fill="#888"/><path d="M288 246h33v3h-33z" fill="#ff0"/>
            </svg>
            <path d="M0 18.500h1262M361.500 0v496M354.500 11.500h14v14h-14z" stroke="#fff"/>
          </g>
        </svg>
        <div class="vscroll"><i class="up"></i><i class="space"></i><i class="thumb"></i><i class="down"></i></div>
      </div>
      <div class="tabrow">
        <button class="nav first" aria-label="Previous layout"><i class="left"></i></button>
        <button class="nav" aria-label="Next layout"><i class="right"></i></button>
        <button class="nav" aria-label="Last layout"><i class="right"></i><i class="stop"></i></button>
        <div class="tabs" role="tablist">
          <button class="model" role="tab">Model</button><button role="tab">01</button><button role="tab">02</button><button role="tab">03</button><button role="tab">04</button><button role="tab" class="on" aria-selected="true">05</button><button role="tab">06</button>
        </div>
        <div class="hscroll"><i class="split"></i><i class="left"></i><i class="thumb"></i><i class="space"></i><i class="right"></i></div>
        <i class="corner"></i>
      </div>
    </div>
  </section>

  <div class="dock">
    <div class="vbar" role="toolbar" aria-label="Modify">
      <i class="vgrip"></i>
      <button aria-label="Erase"><svg class="ic"><use href="#erase"/></svg></button>
      <button aria-label="Copy"><svg class="ic"><use href="#copy"/></svg></button>
      <button aria-label="Mirror"><svg class="ic"><use href="#mirror"/></svg></button>
      <button aria-label="Offset"><svg class="ic"><use href="#offset"/></svg></button>
      <button aria-label="Array"><svg class="ic"><use href="#array"/></svg></button>
      <button aria-label="Move"><svg class="ic"><use href="#move"/></svg></button>
      <button aria-label="Rotate"><svg class="ic"><use href="#rotate"/></svg></button>
      <button aria-label="Scale"><svg class="ic"><use href="#scale"/></svg></button>
      <button aria-label="Stretch"><svg class="ic"><use href="#stretch"/></svg></button>
      <button aria-label="Trim"><svg class="ic"><use href="#trim"/></svg></button>
      <button aria-label="Extend"><svg class="ic"><use href="#extend"/></svg></button>
      <button aria-label="Break at point"><svg class="ic"><use href="#breakpt"/></svg></button>
      <button aria-label="Break"><svg class="ic"><use href="#break"/></svg></button>
      <button aria-label="Join"><svg class="ic"><use href="#join"/></svg></button>
      <button aria-label="Chamfer"><svg class="ic"><use href="#chamfer"/></svg></button>
      <button aria-label="Fillet"><svg class="ic"><use href="#fillet"/></svg></button>
      <button aria-label="Explode"><svg class="ic"><use href="#explode"/></svg></button>
    </div>
    <div class="vbar" role="toolbar" aria-label="Draw order">
      <i class="vgrip"></i>
      <button aria-label="Bring to front"><svg class="ic"><use href="#front"/></svg></button>
      <button aria-label="Send to back"><svg class="ic"><use href="#back"/></svg></button>
      <button aria-label="Bring above objects"><svg class="ic"><use href="#above"/></svg></button>
      <button aria-label="Send under objects"><svg class="ic"><use href="#under"/></svg></button>
    </div>
  </div>
</main>

<footer class="bottom">
  <section class="command">
    <div class="cgrip"><i></i></div>
    <div class="cbody">
      <div class="history">
        <pre>Plotting viewport 1.
Command: cps
Setup may in da duoc apply cho toan bo cac Layout :v
Command:</pre>
        <div class="vscroll"><i class="up"></i><i class="space"></i><i class="thumb"></i><i class="down"></i></div>
      </div>
      <div class="prompt">
        <label for="cmd">Command:</label><input id="cmd" type="text">
        <div class="hscroll"><i class="left"></i><i class="thumb"></i><i class="space"></i><i class="right"></i></div>
      </div>
    </div>
  </section>

  <div class="status">
    <span class="coords">-516.9886, 2014.4025, 0.0000</span>
    <div class="grp">
      <button aria-label="Snap"><svg class="ic"><use href="#snap"/></svg></button>
      <button aria-label="Grid"><svg class="ic"><use href="#grid"/></svg></button>
      <button aria-label="Ortho"><svg class="ic"><use href="#ortho"/></svg></button>
      <button aria-label="Polar" aria-pressed="true"><svg class="ic"><use href="#polar"/></svg></button>
      <button aria-label="Object snap" aria-pressed="true"><svg class="ic"><use href="#osnap"/></svg></button>
      <button aria-label="Object snap tracking" aria-pressed="true"><svg class="ic"><use href="#otrack"/></svg></button>
      <button aria-label="Dynamic UCS"><svg class="ic"><use href="#ducs"/></svg></button>
      <button aria-label="Dynamic input" aria-pressed="true"><svg class="ic"><use href="#dyn"/></svg></button>
      <button aria-label="Lineweight"><svg class="ic"><use href="#lwt"/></svg></button>
      <button aria-label="Quick properties"><svg class="ic"><use href="#qp"/></svg></button>
    </div>
    <i class="fill"></i>
    <div class="grp">
      <button aria-label="Paper"><svg class="ic"><use href="#modelpaper"/></svg></button>
      <button aria-label="Quick view layouts"><svg class="ic"><use href="#qvlayout"/></svg></button>
    </div>
    <div class="grp gap">
      <button aria-label="Pan"><svg class="ic"><use href="#pan"/></svg></button>
      <button aria-label="Zoom"><svg class="ic"><use href="#zoom"/></svg></button>
      <button aria-label="SteeringWheel"><svg class="ic"><use href="#wheel"/></svg></button>
      <button aria-label="ShowMotion"><svg class="ic"><use href="#motion"/></svg></button>
    </div>
    <div class="grp wide">
      <button class="slim" aria-label="Previous viewport"><i class="left pale"></i></button>
      <button aria-label="Maximize viewport"><svg class="ic"><use href="#vpmax"/></svg></button>
      <button class="slim" aria-label="Next viewport"><i class="right pale"></i></button>
      <button aria-label="Annotation visibility"><svg class="ic"><use href="#annovis"/></svg></button>
      <button aria-label="Annotation autoscale"><svg class="ic"><use href="#annoauto"/></svg></button>
    </div>
    <div class="grp near">
      <button class="ws"><svg class="ic"><use href="#gear"/></svg>AutoCAD Classic<svg class="car big"><use href="#caret"/></svg></button>
      <button aria-label="Lock"><svg class="ic"><use href="#padlock"/></svg></button>
    </div>
    <div class="traybox">
      <button aria-label="Plot and publish"><svg class="ic"><use href="#plotpub"/></svg></button>
      <button aria-label="Plot complete"><svg class="ic"><use href="#printok"/></svg></button>
      <button aria-label="Tray"><svg class="ic"><use href="#tray"/></svg></button>
    </div>
    <div class="grp last">
      <button class="slim" aria-label="Status menu"><svg class="car"><use href="#caret"/></svg></button>
      <button aria-label="Clean screen"><svg class="ic"><use href="#clean"/></svg></button>
    </div>
  </div>

  <div class="balloon" role="status">
    <div class="bhead"><strong>Plot and Publish Job Complete</strong><button aria-label="Close notification"><svg viewBox="0 0 8 8"><path d="M0 0l8 8M8 0L0 8" stroke="#000" stroke-width="2"/></svg></button></div>
    <p>No errors or warnings found</p>
    <a href="#">Click to view plot and publish details...</a>
    <svg class="tail" viewBox="0 0 22 20"><path d="M2 0l18 18V0z" fill="#ffffe1"/><path d="M2 .5l18 18V.5" fill="none" stroke="#000"/></svg>
  </div>
  <svg class="watermark" viewBox="0 0 200 34">
    <path d="M1 1h30v30H1z" fill="#d92b4b" stroke="#f0a0ae"/><path d="M2 2l1 12 6 16h8L30 2H19l-7 18L7 2z" fill="#fff"/>
    <text x="37" y="25">Vforum.vn</text>
  </svg>
</footer>
</body>
</html>
```

FILE: styles.css
```css
* { box-sizing: border-box; }
html, body { margin: 0; }
body {
  min-height: 100vh;
  display: flex;
  flex-direction: column;
  background: #686868;
  color: #000;
  font: 12px/16px "Open Sans", "Noto Sans", sans-serif;
  overflow: hidden;
}
button {
  margin: 0; padding: 0; border: 0; background: none;
  color: inherit; font: inherit; white-space: nowrap;
  display: flex; align-items: center; justify-content: center;
}
i { display: block; flex: none; }
svg { display: block; flex: none; fill: none; }
.defs { position: absolute; width: 0; height: 0; }
.ic { width: 18px; height: 18px; stroke: #444c56; }
.ic.sm { width: 16px; height: 16px; }
.ic.mute { stroke: #6a7078; }
.car { width: 6px; height: 4px; }
.car.big { width: 8px; height: 5px; }
.car.off { opacity: .5; }
.hue { fill: #c9e6f7; stroke: #1267b5; }

/* title and menu */
.top { display: flex; background: #777; }
.logo { width: 41px; height: 41px; border: 1px solid #333; background: linear-gradient(#ddd, #999 60%, #bbb); }
.logo svg { width: 38px; height: 38px; }
.top-rows { flex: 1; min-width: 0; }
.titlebar {
  position: relative; display: flex; height: 24px; border-bottom: 1px solid #2f2f2f;
  background: linear-gradient(115deg, #fff 22%, #f1f1f1 30%, #fff 31%, #fff 60%, #f0f0f0 64%, #fff 65%);
}
.quick, .infocenter { display: flex; background: linear-gradient(#838383, #a2a2a2); border: solid #444; border-width: 1px 1px 0; }
.quick { width: 175px; padding-left: 3px; }
.quick button, .infocenter button { width: 23px; }
.quick .slim, .infocenter .slim { width: 9px; }
.quick .end { width: 14px; }
.title { flex: 1; display: flex; gap: 20px; margin: 0; padding-left: 235px; font: 12px/23px Roboto, "Open Sans", sans-serif; white-space: nowrap; }
.infocenter { width: 327px; }
.infocenter .expand { width: 12px; }
.expand svg { width: 5px; height: 8px; fill: #000; }
.infocenter input { flex: 1; min-width: 0; border: 0; padding: 4px 3px 0; background: #f6f6f6; font: italic 11px "Open Sans", sans-serif; }
.infocenter input::placeholder { color: #6c6c6c; opacity: 1; }
.winbtns { display: flex; width: 103px; height: 18px; margin: 0 3px 0 17px; border: 1px solid #a3a3a8; border-top: 0; border-radius: 0 0 5px 5px; background: #fff; }
.winbtns button { width: 28px; border-right: 1px solid #a3a3a8; }
.winbtns .close { flex: 1; border: 0; }
.winbtns svg { width: 14px; height: 14px; stroke: #55556a; }
.pointer { position: absolute; left: 380px; top: 9px; width: 12px; height: 19px; z-index: 2; }
.menubar { display: flex; height: 22px; padding-left: 3px; background: linear-gradient(#969696, #6a6a6a 60%, #575757); color: #fff; }
.menubar > button { padding: 0 11px; }
.mdi { display: flex; gap: 3px; margin-left: auto; padding-right: 2px; }
.mdi svg { width: 14px; height: 14px; stroke: #333; }

/* toolbars */
.bars { display: flex; flex-direction: column; gap: 3px; margin-top: -1px; padding-bottom: 5px; }
.barrow { display: flex; gap: 1px; }
.bar { display: flex; height: 24px; border: 1px solid #3c3c3c; background: #ececec; }
.bar > button { width: 23px; flex: none; }
.bar > .slim { width: 13px; }
.grip { width: 8px; background: radial-gradient(circle, #bbb 0 1px, transparent 1px) 0 4px / 3px 3px, #616161; border: solid #616161; border-width: 3px 1px; }
.grip.thin { width: 7px; }
.sep { width: 6px; margin: 2px 0; background: linear-gradient(#8a8a8a, #8a8a8a) 2px 0 / 1px 100% no-repeat; }
.sep.two { margin: 0; background: linear-gradient(90deg, #8a8a8a 1px, #eee 1px 3px, #8a8a8a 3px 4px, #eee 4px) 1px 2px / 4px 18px no-repeat; }
.combo {
  display: flex; align-items: center; flex: none; height: 22px; padding: 0 2px 0 4px;
  border: 1px solid #8f8f8f; border-radius: 3px;
  background: linear-gradient(#f8f8f8, #dcdcdc);
}
.combo::after { content: ""; width: 0; border: solid transparent; border-width: 5px 4px 0; border-top-color: #000; }
.combo select { flex: 1; min-width: 0; padding: 0; border: 0; appearance: none; background: none; color: #000; font: inherit; }
.w-style { width: 120px; }
.w-ws { width: 174px; padding-left: 8px; }
.w-layer { width: 299px; padding-left: 1px; gap: 1px; }
.w-color { width: 149px; }
.w-ltype { width: 160px; }
.w-lw { width: 124px; }
.inset { padding-left: 18px; }
.swatch { width: 10px; height: 10px; margin: 0 5px 0 0; border: 1px solid #333; background: #f00; }
.w-layer .swatch { margin: 0 3px 0 1px; }
.stroke { width: 60px; height: 1px; margin-right: 5px; background: #000; }
.stroke.short { width: 35px; }
.disabled { background: #f3f3f3; border-color: #bbb; }
.disabled select { color: #777; opacity: 1; padding-left: 4px; }
.disabled::after { border-top-color: #aaa; }

/* workspace */
.workspace { flex: 1; display: flex; min-height: 0; }
.dock { width: 25px; }
.vbar { width: 25px; border: 1px solid #3c3c3c; background: #ececec; margin-bottom: 1px; padding-bottom: 1px; }
.vbar button { width: 23px; height: 22px; }
.vgrip { height: 7px; border: solid #616161; border-width: 1px 3px; background: radial-gradient(circle, #bbb 0 1px, transparent 1px) 0 0 / 3px 3px, #616161; }
.frame { flex: 1; min-width: 0; display: flex; margin: 0 6px 5px 4px; border: 1px solid #bcbcbc; border-top-color: #444; border-left-width: 2px; background: #f0f0f0; }
.workspace > .dock:last-child { width: 27px; }
.palette { display: flex; flex-direction: column; align-items: center; gap: 7px; width: 22px; margin-bottom: -2px; padding: 4px 0 2px; border: 1px solid #444; border-radius: 2px; background: #cbcbcb; }
.palette button { padding-left: 3px; }
.palette button svg { width: 12px; height: 12px; }
.ptitle { margin-top: auto; writing-mode: vertical-rl; transform: rotate(180deg); font-family: Roboto, "Open Sans", sans-serif; }
.view { flex: 1; min-width: 0; display: flex; flex-direction: column; }
.viewrow { flex: 1; display: flex; min-height: 0; }
.canvas { flex: 1; min-width: 0; height: 100%; background: #000; }
.vscroll { display: flex; flex-direction: column; align-items: center; width: 17px; padding: 6px 0; background: #efefef; border-left: 1px solid #fafafa; }
.space, .fill { flex: 1; }
.up, .down { border: solid transparent; }
.up { border-width: 0 4px 4px; border-bottom-color: #333; }
.down { border-width: 4px 4px 0; border-top-color: #333; }
.left, .right { border: solid transparent; }
.left { border-width: 4px 4px 4px 0; border-right-color: #333; }
.right { border-width: 4px 0 4px 4px; border-left-color: #333; }
.pale.left { border-right-color: #c8c8c8; }
.pale.right { border-left-color: #c8c8c8; }
.thumb { width: 15px; height: 15px; margin-bottom: 8px; border: 1px solid #999; border-radius: 2px; background: linear-gradient(90deg, #f6f6f6, #d2d2d2); }
.tabrow { display: flex; height: 16px; background: #f0f0f0; }
.nav { width: 15px; gap: 1px; border-right: 1px solid #aaa; }
.nav.first { width: 8px; }
.nav .left { border-right-color: #666; }
.nav .right { border-left-color: #666; border-left-width: 5px; }
.stop { width: 1px; height: 9px; background: #666; }
.tabs { display: flex; padding-left: 6px; }
.tabs button { position: relative; width: 29px; color: #000; font-family: Roboto, "Open Sans", sans-serif; }
.tabs .model { width: 44px; padding-right: 4px; }
.tabs button::after { content: ""; position: absolute; right: 0; top: 1px; width: 1px; height: 14px; background: #777; transform: skewX(-20deg); }
.tabs .model::before { content: ""; position: absolute; left: -4px; top: 1px; width: 1px; height: 14px; background: #777; transform: skewX(20deg); }
.tabs .on { background: #000; color: #fff; clip-path: polygon(0 0, 100% 0, calc(100% - 4px) 100%, 4px 100%); }
.hscroll { display: flex; align-items: center; gap: 8px; flex: 1; padding: 0 6px 0 0; }
.hscroll .thumb { height: 13px; margin: 0; background: linear-gradient(#f6f6f6, #d2d2d2); }
.tabrow .hscroll { margin-left: auto; flex: none; width: 437px; background: #efefef; }
.split { width: 4px; height: 13px; border: 1px solid #aaa; background: #fff; }
.corner { width: 17px; border-top: 1px solid #aaa; }

/* command window */
.bottom { position: relative; }
.command { display: flex; background: #fff; font: 13px/16px "Liberation Mono", monospace; }
.cgrip { width: 15px; background: linear-gradient(90deg, #999, #aaa); border-radius: 5px 0 0; padding: 3px 2px; }
.cgrip i { width: 11px; height: 4px; background: repeating-linear-gradient(90deg, #222 0 1px, transparent 1px 2px) 0 0 / 100% 1px, repeating-linear-gradient(90deg, #222 0 1px, transparent 1px 2px) 0 2px / 100% 1px; background-repeat: no-repeat; }
.cbody { flex: 1; min-width: 0; }
.history { display: flex; height: 68px; border-bottom: 1px solid #999; }
.history pre { flex: 1; margin: 0; padding: 1px 2px; font: inherit; }
.prompt { display: flex; align-items: center; height: 18px; padding-left: 2px; }
.prompt label { padding-top: 3px; }
.prompt input { flex: 1; min-width: 0; border: 0; padding: 0 8px; outline: 0; font: inherit; }
.prompt .hscroll { flex: none; width: 78px; height: 18px; margin-right: 17px; gap: 5px; background: #efefef; }

/* status bar */
.status { display: flex; height: 22px; border-top: 1px solid #333; background: linear-gradient(#7e7e7e, #999); font: 11px/20px "Liberation Sans", sans-serif; }
.coords { width: 190px; padding-left: 12px; white-space: nowrap; line-height: 22px; }
.grp { display: flex; border-left: 1px solid #555; }
.grp button { width: 22px; border-right: 1px solid #666; background: linear-gradient(#aaa, #bbb); }
.grp button[aria-pressed="true"] { background: linear-gradient(#8fb6c6, #bfe6f2); }
.grp .slim { width: 14px; }
.gap { margin-left: 11px; }
.wide { margin-left: 23px; }
.near { margin-left: 5px; }
.grp .ws { width: 116px; gap: 2px; }
.traybox { display: flex; align-items: center; gap: 2px; width: 66px; margin: 0 4px 0 1px; padding: 0 3px; border: 1px solid #444; background: #999; }
.last { border: 0; }

.balloon { position: absolute; right: 38px; bottom: 30px; width: 246px; height: 80px; padding: 8px 8px 10px 15px; border: 1px solid #000; border-radius: 16px; background: #ffffe1; font-family: Roboto, "Open Sans", sans-serif; }
.bhead { display: flex; justify-content: flex-end; align-items: center; gap: 20px; height: 17px; white-space: nowrap; }
.bhead button { width: 16px; height: 16px; border: 1px solid #888; background: #fff; }
.bhead svg { width: 8px; height: 8px; }
.balloon p { margin: 5px 0; }
.balloon a { color: #00f; white-space: nowrap; }
.tail { position: absolute; right: 52px; top: 77px; width: 22px; height: 20px; }
.watermark { position: absolute; right: 136px; bottom: 75px; width: 200px; height: 34px; }
.watermark text { font: bold 26px "DejaVu Sans", sans-serif; fill: #fff; stroke: #111; stroke-width: 4px; paint-order: stroke; stroke-linejoin: round; }
```
